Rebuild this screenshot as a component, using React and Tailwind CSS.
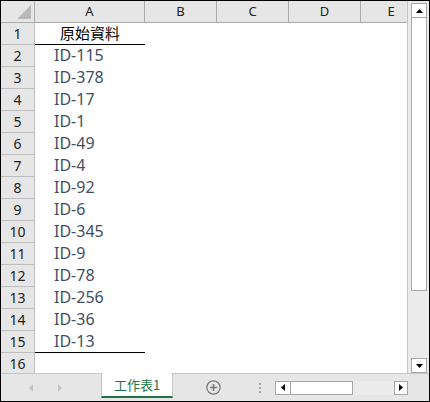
const rows = [
  '原始資料',
  'ID-115',
  'ID-378',
  'ID-17',
  'ID-1',
  'ID-49',
  'ID-4',
  'ID-92',
  'ID-6',
  'ID-345',
  'ID-9',
  'ID-78',
  'ID-256',
  'ID-36',
  'ID-13',
  '',
]

const Tri = ({ dir, color = '#000', w = 7, h = 4 }) => {
  const pts = {
    up: `0,${h} ${w},${h} ${w / 2},0`,
    down: `0,0 ${w},0 ${w / 2},${h}`,
    left: `${w},0 ${w},${h} 0,${h / 2}`,
    right: `0,0 0,${h} ${w},${h / 2}`,
  }[dir]
  return (
    <svg width={w} height={h} viewBox={`0 0 ${w} ${h}`}>
      <polygon points={pts} fill={color} />
    </svg>
  )
}

function Grid() {
  return (
    <div className="w-[407px] flex flex-col overflow-hidden border-r border-[#c6c6c6] font-['Noto_Sans',sans-serif]">
      {/* column headers */}
      <div className="flex h-[22px] shrink-0 bg-[#e6e6e6] text-[13px] text-[#222]">
        <div className="w-[34px] border-r border-b border-[#ababab] flex items-end justify-end pr-[3px] pb-[3px]">
          <svg width="14" height="14" viewBox="0 0 14 14">
            <polygon points="0,14 14,14 14,0" fill="#b9b9b9" />
          </svg>
        </div>
        <div className="w-[110px] border-r border-b border-[#ababab] flex items-center justify-center">A</div>
        <div className="w-[72px] border-r border-b border-[#ababab] flex items-center justify-center">B</div>
        <div className="w-[72px] border-r border-b border-[#ababab] flex items-center justify-center">C</div>
        <div className="w-[72px] border-r border-b border-[#ababab] flex items-center justify-center">D</div>
        <div className="flex-1 border-b border-[#ababab] flex items-center justify-center pl-[14px]">E</div>
      </div>
      {rows.map((txt, i) => (
        <div key={i} className="flex h-[22px] shrink-0">
          <div className="w-[34px] bg-[#e6e6e6] border-r border-b border-[#bdbdbd] flex items-center justify-center text-[14px] text-[#222]">
            {i + 1}
          </div>
          <div
            className={
              'w-[110px] flex items-center border-b ' +
              (i === 0 || i === 14 ? 'border-black ' : 'border-transparent ') +
              (i === 0
                ? "justify-center text-[15px] text-black font-['Noto_Sans_CJK_TC',sans-serif]"
                : 'pl-[19px] pb-[2px] text-[16px] text-[#3f4f63]')
            }
          >
            {txt}
          </div>
          <div className="flex-1" />
        </div>
      ))}
    </div>
  )
}

function VScroll() {
  return (
    <div className="w-[21px] bg-[#ebebeb] flex flex-col pl-[3px] pt-[2px]">
      <div className="w-[16px] h-[15px] bg-white border border-[#a6a6a6] flex items-center justify-center">
        <Tri dir="up" />
      </div>
      <div className="w-[16px] h-[273px] bg-white border-x border-b border-[#a6a6a6]" />
      <div className="flex-1" />
      <div className="w-[16px] h-[15px] bg-white border border-[#a6a6a6] flex items-center justify-center">
        <Tri dir="down" />
      </div>
    </div>
  )
}

function TabBar() {
  return (
    <div className="flex h-[28px] border-t border-[#c6c6c6] bg-[#e6e6e6] font-['Noto_Sans_CJK_TC',sans-serif]">
      <div className="w-[100px] flex items-center pl-[28px] gap-[25px]">
        <Tri dir="left" color="#c3c3c3" w={4} h={8} />
        <Tri dir="right" color="#c3c3c3" w={4} h={8} />
      </div>
      <div className="w-[72px] h-[25px] -mt-px bg-white border-x border-[#c6c6c6] border-b-2 border-b-[#217346] flex items-center justify-center text-[13px] text-[#217346]">
        工作表1
      </div>
      <div className="flex items-center ml-[33px]">
        <svg width="15" height="15" viewBox="0 0 15 15">
          <circle cx="7.5" cy="7.5" r="6.6" fill="none" stroke="#7a7a7a" strokeWidth="1.3" />
          <path d="M7.5 4v7M4 7.5h7" stroke="#7a7a7a" strokeWidth="1.6" />
        </svg>
      </div>
      <div className="ml-[37px] w-[3px] flex flex-col items-center justify-center gap-[2px]">
        <div className="w-[2px] h-[2px] bg-[#a8a8a8]" />
        <div className="w-[2px] h-[2px] bg-[#a8a8a8]" />
        <div className="w-[2px] h-[2px] bg-[#a8a8a8]" />
      </div>
      <div className="ml-[14px] w-[133px] flex items-center">
        <div className="flex w-full h-[14px]">
          <div className="w-[16px] bg-white border border-[#a6a6a6] flex items-center justify-center">
            <Tri dir="left" w={4} h={7} />
          </div>
          <div className="w-[62px] bg-white border-y border-r border-[#a6a6a6]" />
          <div className="flex-1 bg-[#ececec]" />
          <div className="w-[14px] bg-white border border-[#a6a6a6] flex items-center justify-center">
            <Tri dir="right" w={4} h={7} />
          </div>
        </div>
      </div>
      <div className="flex-1" />
    </div>
  )
}

export default function App() {
  return (
    <div className="w-[430px] h-[402px] border border-black bg-white flex flex-col overflow-hidden">
      <div className="flex h-[372px] shrink-0">
        <Grid />
        <VScroll />
      </div>
      <TabBar />
    </div>
  )
}
